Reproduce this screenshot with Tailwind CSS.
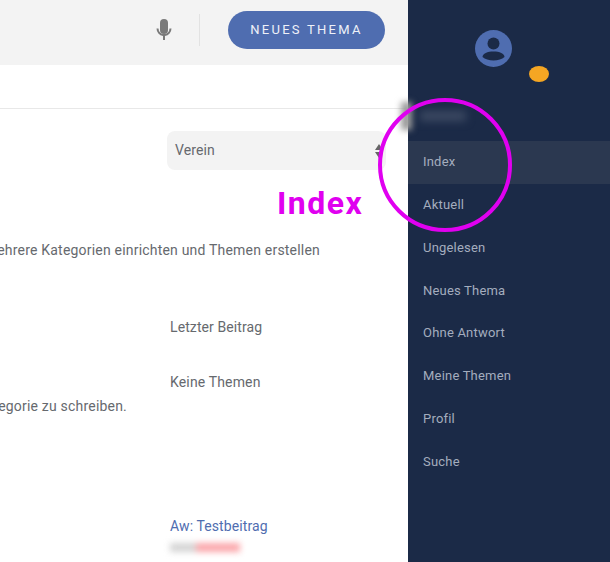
<!DOCTYPE html>
<html lang="de">
<head>
<meta charset="utf-8">
<script src="https://cdn.jsdelivr.net/npm/@tailwindcss/browser@4"></script>
</head>
<body class="m-0 bg-white">
<div class="relative flex w-[610px] h-[562px] overflow-hidden bg-white font-['Roboto',sans-serif]">
  <main class="w-[408px] shrink-0 flex flex-col text-[14px] tracking-[0.1px] text-[#66696e]">
    <header class="h-[65px] shrink-0 bg-[#f3f3f3] flex items-center justify-end pr-[23px] pb-[5px]">
      <svg class="w-[18px] h-[24px] mr-[26px]" viewBox="0 0 18 24" fill="#7a7a7a" aria-hidden="true">
        <rect x="5" y="1" width="8" height="15" rx="4"/>
        <path d="M1.500 10.500h2a5.500 5.500 0 0 0 11 0h2a7.500 7.500 0 0 1-6.500 7.400V22H8v-4.100a7.500 7.500 0 0 1-6.500-7.400z"/>
      </svg>
      <div class="w-px h-[32px] bg-[#e2e2e2] mr-[28px]"></div>
      <button class="w-[157px] h-[38px] rounded-full bg-[#4f6db0] text-[#eef1f8] text-[13px] tracking-[2.25px] font-normal">NEUES THEMA</button>
    </header>
    <div class="h-[44px] shrink-0 border-b border-[#e8e8e8]"></div>
    <div class="pl-[167px] pr-[22px] pt-[22px] shrink-0">
      <div class="h-[39px] rounded-lg bg-[#f3f3f3] flex items-center justify-between pl-[8px] pr-[2px]">
        <span>Verein</span>
        <svg class="w-[10px] h-[16px]" viewBox="0 0 10 16" fill="#666" aria-hidden="true"><path d="M5 1l4 6H1zM5 15l4-6H1z"/></svg>
      </div>
    </div>
    <div class="w-[320px] flex justify-end whitespace-nowrap tracking-[0.2px] mt-[70px] h-[20px] leading-[20px] shrink-0">mehrere Kategorien einrichten und Themen erstellen</div>
    <div class="pl-[170px] mt-[57px] h-[20px] leading-[20px] shrink-0">Letzter Beitrag</div>
    <div class="pl-[170px] mt-[35px] h-[20px] leading-[20px] shrink-0 tracking-[0.15px]">Keine Themen</div>
    <div class="w-[127px] flex justify-end whitespace-nowrap tracking-[0.2px] mt-[4px] h-[20px] leading-[20px] shrink-0">Kategorie zu schreiben.</div>
    <div class="pl-[170px] mt-[100px] h-[20px] leading-[20px] shrink-0 text-[#4f6db0]">Aw: Testbeitrag</div>
    <div class="pl-[170px] mt-[7px] flex blur-[3px] shrink-0">
      <div class="w-[26px] h-[9px] bg-[#d4d4d4]"></div>
      <div class="w-[44px] h-[9px] bg-[#fba6aa]"></div>
    </div>
  </main>
  <aside class="flex-1 bg-[#1b2a47] flex flex-col text-[13px] tracking-[0.2px] text-[#a4adbe]">
    <div class="h-[141px] shrink-0 relative">
      <div class="absolute left-[67px] top-[30px] w-[37px] h-[37px]">
        <svg class="w-full h-full" viewBox="0 0 37 37" aria-hidden="true">
          <circle cx="18.500" cy="18.500" r="18.500" fill="#4f6db0"/>
          <circle cx="18.500" cy="13.500" r="6" fill="#1b2a47"/>
          <path d="M7.500 27c0-3.500 5-5.500 11-5.500s11 2 11 5.500c-2.500 2-6.500 3.500-11 3.500s-8.500-1.500-11-3.500z" fill="#1b2a47"/>
        </svg>
      </div>
      <div class="absolute left-[121px] top-[66px] w-[20px] h-[16px] rounded-[50%] bg-[#f5a623]"></div>
      <div class="absolute left-[12px] top-[111px] w-[46px] h-[10px] bg-[#3d4a63] blur-[4px]"></div>
    </div>
    <nav class="flex flex-col">
      <a class="h-[43px] flex items-center pl-[15px] pb-[2px] bg-[#2b3850]">Index</a>
      <a class="h-[43px] flex items-center pl-[15px] pb-[2px]">Aktuell</a>
      <a class="h-[43px] flex items-center pl-[15px] pb-[2px]">Ungelesen</a>
      <a class="h-[43px] flex items-center pl-[15px] pb-[2px]">Neues Thema</a>
      <a class="h-[43px] -mt-px flex items-center pl-[15px] pb-[2px]">Ohne Antwort</a>
      <a class="h-[43px] flex items-center pl-[15px] pb-[2px]">Meine Themen</a>
      <a class="h-[43px] flex items-center pl-[15px] pb-[2px]">Profil</a>
      <a class="h-[43px] flex items-center pl-[15px] pb-[2px]">Suche</a>
    </nav>
  </aside>
  <div class="absolute left-[401px] top-[102px] w-[11px] h-[28px] bg-[#9a9a9a] blur-[3px]"></div>
  <div class="absolute left-[378px] top-[98px] w-[134px] h-[134px] rounded-full border-[4px] border-[#e000f0]"></div>
  <div class="absolute left-[277px] top-[183px] text-[32px] leading-[40px] font-bold tracking-[1.5px] text-[#e000f0]">Index</div>
</div>
</body>
</html>
